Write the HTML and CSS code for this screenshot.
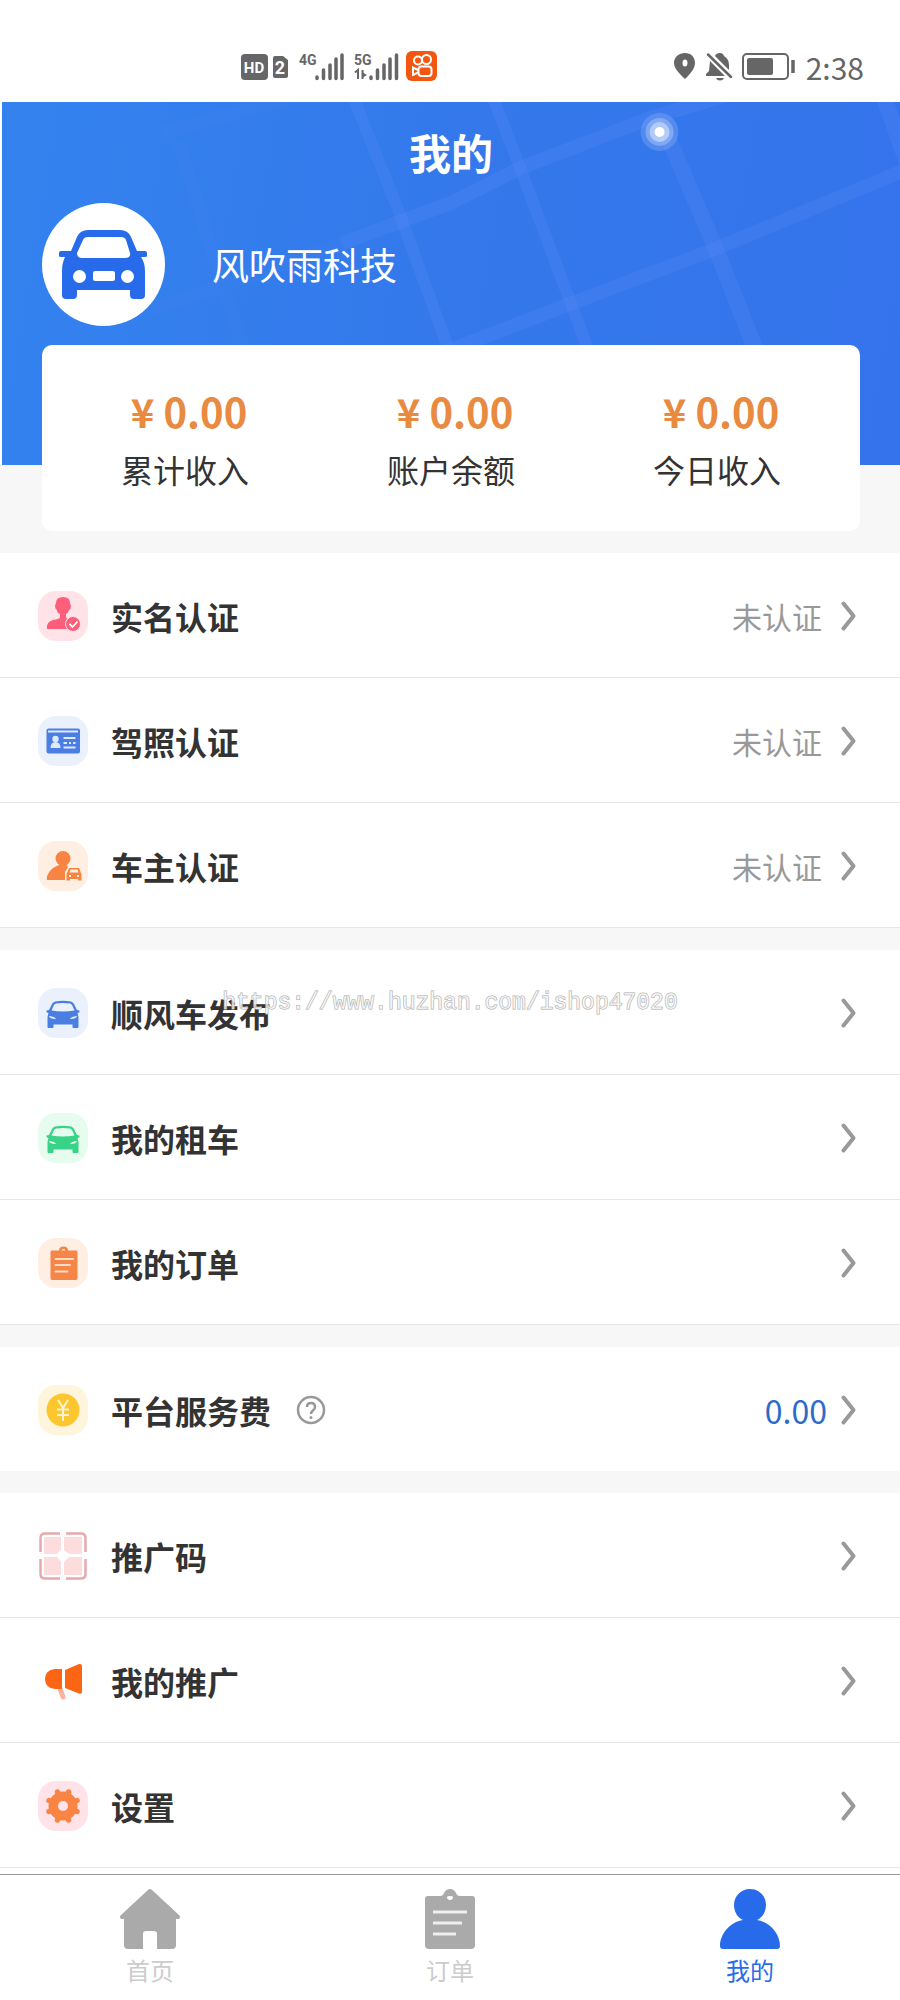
FILE: index.html
```
<!DOCTYPE html>
<html lang="zh-CN">
<head>
    <meta charset="UTF-8">
    <meta name="viewport" content="width=device-width, initial-scale=1.0">
    <title>我的</title>
    <link rel="stylesheet" href="styles.css">
</head>
<body>
    <!-- 公用图标 -->
    <svg class="sprite" aria-hidden="true">
        <symbol id="arrow" viewBox="0 0 16 30">
            <path d="M2.500 2.500L12.500 15L2.500 27.500" fill="none" stroke="#999" stroke-width="4" stroke-linecap="round" stroke-linejoin="round"/>
        </symbol>
        <symbol id="car" viewBox="0 0 50 50">
            <path fill-rule="evenodd" fill="currentColor" d="M17 13.500Q25 12 33 13.500Q35 14 36 16L39 22L41.500 22.500Q42 24.500 39.500 25L40.500 29V39Q40.500 40 39.500 40H35.500Q34.500 40 34.500 39V36.500H15.500V39Q15.500 40 14.500 40H10.500Q9.500 40 9.500 39V29L10.500 25Q8 24.500 8.500 22.500L11 22L14 16Q15 14 17 13.500ZM18 15.500Q16.500 16 16 17L13.500 22.500Q25 24.500 36.500 22.500L34 17Q33.500 16 32 15.500Q25 14.500 18 15.500ZM11 28Q11.500 31 18 31Q17 28.500 11 28ZM39 28Q38.500 31 32 31Q33 28.500 39 28Z"/>
        </symbol>
    </svg>

    <!-- 状态栏 -->
    <div class="status-bar">
        <svg width="198" height="34" viewBox="0 0 198 34" aria-hidden="true">
            <rect x="1" y="4" width="27" height="26" rx="4" fill="#666"/>
            <text class="hd" x="14" y="23" text-anchor="middle">HD</text>
            <path d="M35 6H43L48 10V26Q48 28 46 28H35Q33 28 33 26V8Q33 6 35 6Z" fill="#666"/>
            <text class="sim" x="40" y="24" text-anchor="middle">2</text>
            <text class="net" x="59" y="15">4G</text>
            <path d="M77 28.500V27M83.500 28.500V20M90 28.500V15M96 28.500V9M102 28.500V5" stroke="#666" stroke-width="3.500" stroke-linecap="round"/>
            <text class="net" x="114" y="15">5G</text>
            <path d="M115 22.500L118 20V29M122.500 20V29" fill="none" stroke="#666" stroke-width="2"/>
            <path d="M122 22L127 25L122 28Z" fill="#666"/>
            <path d="M131 28.500V27M137.500 28.500V20M144 28.500V15M150 28.500V9M156.500 28.500V5" fill="none" stroke="#666" stroke-width="3.500" stroke-linecap="round"/>
            <rect x="166" y="1" width="31" height="30" rx="6" fill="#f2560f"/>
            <g fill="none" stroke="#fff" stroke-width="2">
                <circle cx="178" cy="10.500" r="4"/>
                <circle cx="186.500" cy="9.500" r="4.500"/>
                <rect x="178.500" y="16.500" width="13" height="9.500" rx="3"/>
                <path d="M178 20L173 17.500V25L178 22.500"/>
            </g>
        </svg>
        <div class="status-right">
            <svg width="124" height="30" viewBox="0 0 124 30" aria-hidden="true">
                <path fill="#666" fill-rule="evenodd" d="M11 1C17 1 21 5 21 11C21 17 15 23 11 27C7 23 0 17 0 11C0 5 5 1 11 1ZM11 7.500A2.500 3.500 0 1 0 11 14.500A2.500 3.500 0 1 0 11 7.500Z"/>
                <path fill="#666" d="M36 9L51 24H32V22L35 19ZM41 4Q42 1 46 1Q49 1 50 4Q55 7 55 13V18ZM42 26H50Q49 28.500 46 28.500T42 26Z"/>
                <path d="M34 2.500L57 25" stroke="#666" stroke-width="2.500" stroke-linecap="round"/>
                <rect x="69" y="2" width="45" height="25" rx="4" fill="none" stroke="#666" stroke-width="2"/>
                <rect x="73" y="6" width="26" height="17" rx="2" fill="#666"/>
                <path d="M119 8V21" stroke="#666" stroke-width="3.500"/>
            </svg>
            <time class="clock">2:38</time>
        </div>
    </div>

    <!-- 头部 -->
    <header class="hero">
        <svg class="hero-map" viewBox="0 0 900 364" preserveAspectRatio="xMidYMin slice" aria-hidden="true">
            <g fill="none" stroke="#5a8cf8" stroke-opacity=".26">
                <path stroke-width="12" d="M350 -10L397 108L452 260M490 -10L520 68L592 260"/>
                <path stroke-width="16" d="M665 30L713 141L760 260M882 -10L912 75"/>
                <path stroke-width="14" d="M340 142L450 101L520 66L650 16L730 -8M440 252L573 201L713 148L910 66"/>
                <path stroke-width="14" stroke-opacity=".08" d="M150 208L340 142M160 31L290 -4M177 40L245 260"/>
            </g>
            <g fill="#fff">
                <circle cx="659" cy="30" r="19" fill-opacity=".15"/>
                <circle cx="659" cy="30" r="14" fill-opacity=".25"/>
                <circle cx="659" cy="30" r="10" fill-opacity=".4"/>
                <circle cx="659" cy="30" r="5"/>
            </g>
        </svg>
        <h1>我的</h1>
        <div class="profile">
            <svg class="avatar" viewBox="0 0 123 123" aria-hidden="true">
                <circle cx="61.500" cy="61.500" r="61.500" fill="#fff"/>
                <path fill="#286bea" fill-rule="evenodd" d="M46 27H78Q86 27 89 34L95 48H103Q105 48 105 50V53Q105 54 103 54H99Q103 60 103 68V92Q103 96 99 96H92Q88 96 88 92V87H35V92Q35 96 31 96H24Q20 96 20 92V68Q20 60 23 54H19Q17 54 17 53V50Q17 48 19 48H29L35 34Q38 27 46 27ZM46 34Q42 34 41 37L35 50Q35 55 40 55H83Q89 55 88 50L84 37Q83 34 79 34ZM37.500 67A6.500 6.500 0 1 0 37.500 80A6.500 6.500 0 1 0 37.500 67ZM85.500 67A6.500 6.500 0 1 0 85.500 80A6.500 6.500 0 1 0 85.500 67ZM53 68Q51 68 51 70V76Q51 78 53 78H71Q73 78 73 76V70Q73 68 71 68Z"/>
            </svg>
            <span class="name">风吹雨科技</span>
        </div>
    </header>

    <!-- 收入统计 -->
    <section class="stats">
        <div class="stat"><strong>¥ 0.00</strong><span>累计收入</span></div>
        <div class="stat"><strong>¥ 0.00</strong><span>账户余额</span></div>
        <div class="stat"><strong>¥ 0.00</strong><span>今日收入</span></div>
    </section>

    <main>
        <section class="group">
            <a class="row" href="#">
                <svg class="icon pink" viewBox="0 0 50 50" aria-hidden="true">
                    <path fill="#fb5f79" d="M25 6Q32 6 32 12L33 15Q33 18 31 19Q30 22 28 23V26Q29 29 34 30L36 31Q27 33 30 38H9Q8 31 15 29Q22 28 22 26V23Q19 22 19 19Q17 18 17 15L18 12Q18 6 25 6Z"/>
                    <circle cx="35" cy="33" r="7.500" fill="#fb5f79" stroke="#ffe3e8"/>
                    <path d="M31.500 33L34.500 36L39.500 30.500" fill="none" stroke="#fff" stroke-width="1.800"/>
                </svg>
                <span class="label">实名认证</span>
                <span class="state">未认证</span>
                <svg class="arrow"><use href="#arrow"/></svg>
            </a>
            <a class="row" href="#">
                <svg class="icon blue" viewBox="0 0 50 50" aria-hidden="true">
                    <rect x="8.500" y="12.500" width="33.500" height="25" rx="2" fill="#4a7ee3"/>
                    <path d="M10 15.500H40" stroke="#dfe8fc" stroke-width="2"/>
                    <circle cx="17.500" cy="23" r="3.200" fill="#dfe8fc"/>
                    <path d="M12.500 32Q12.500 26 17.500 26T22.500 32Z" fill="#dfe8fc"/>
                    <path d="M25.500 22H37.500M25.500 27H29M31 27H33M35 27H37.500M25.500 31.500H37.500" stroke="#dfe8fc" stroke-width="1.800"/>
                </svg>
                <span class="label">驾照认证</span>
                <span class="state">未认证</span>
                <svg class="arrow"><use href="#arrow"/></svg>
            </a>
            <a class="row" href="#">
                <svg class="icon orange" viewBox="0 0 50 50" aria-hidden="true">
                    <circle cx="25" cy="17.500" r="7.500" fill="#f88443"/>
                    <path fill="#f88443" d="M9 39Q8 35 12 30Q16 25 23 23.500H28L30 26L27 31V39Z"/>
                    <path fill="#f88443" fill-rule="evenodd" d="M31 27H41L42.500 31L43.500 33V39.500H40V38H32V39.500H28.500V33L29.500 31ZM32.500 28.500L31.500 31.500H40.500L39.500 28.500ZM31 34V36H33V34ZM39 34V36H41V34Z"/>
                </svg>
                <span class="label">车主认证</span>
                <span class="state">未认证</span>
                <svg class="arrow"><use href="#arrow"/></svg>
            </a>
        </section>

        <section class="group">
            <a class="row" href="#">
                <svg class="icon blue"><use href="#car"/></svg>
                <span class="label">顺风车发布</span>
                <svg class="arrow"><use href="#arrow"/></svg>
            </a>
            <a class="row" href="#">
                <svg class="icon green"><use href="#car"/></svg>
                <span class="label">我的租车</span>
                <svg class="arrow"><use href="#arrow"/></svg>
            </a>
            <a class="row" href="#">
                <svg class="icon orange" viewBox="0 0 50 50" aria-hidden="true">
                    <path fill="#f58648" fill-rule="evenodd" d="M14 12.500H21Q21 8.500 25.500 8.500T30 12.500H38Q39.500 12.500 39.500 14V40Q39.500 42 38 42H14Q12.500 42 12.500 40V14Q12.500 12.500 14 12.500ZM23.500 12.500H27.500Q27 11 25.500 11T23.500 12.500Z"/>
                    <path d="M17.500 21H35M17.500 27H32M17.500 33.500H29.500" stroke="#ffdcc5" stroke-width="2" stroke-linecap="round"/>
                </svg>
                <span class="label">我的订单</span>
                <svg class="arrow"><use href="#arrow"/></svg>
            </a>
            <div class="watermark">https://www.huzhan.com/ishop47020</div>
        </section>

        <section class="group">
            <div class="row">
                <svg class="icon yellow" viewBox="0 0 50 50" aria-hidden="true">
                    <circle cx="25" cy="25" r="16.500" fill="#fcc62e"/>
                    <path d="M20 15L25 23L30 15M25 23V36M19 24.500H31M19 30H31" fill="none" stroke="#fff3cf" stroke-width="2"/>
                </svg>
                <span class="label">平台服务费</span>
                <button class="help" type="button" aria-label="服务费说明">
                    <svg viewBox="0 0 30 30" aria-hidden="true">
                        <circle cx="15" cy="15" r="13" fill="none" stroke="#999" stroke-width="2.500"/>
                        <path d="M11 12Q11 8 15 8T19 12Q19 14 17 15.500T15 19" fill="none" stroke="#999" stroke-width="2.500"/>
                        <circle cx="15" cy="22.500" r="1.500" fill="#999"/>
                    </svg>
                </button>
                <a class="fee" href="#">0.00<svg class="arrow"><use href="#arrow"/></svg></a>
            </div>
        </section>

        <section class="group">
            <a class="row" href="#">
                <svg class="icon" viewBox="0 0 50 50" aria-hidden="true">
                    <path fill="#fddcde" d="M6 6H23V19L19 23H6V6ZM26 6H44V23H31L26 19ZM6 26H19L23 31V44H6ZM31 26H44V44H26V31Z"/>
                    <path d="M2.500 21V7Q2.500 2.500 7 2.500H22M28 2.500H43Q47.500 2.500 47.500 7V21M47.500 28V43Q47.500 47.500 43 47.500H28M22 47.500H7Q2.500 47.500 2.500 43V28" fill="none" stroke="#e7a9ad" stroke-width="2.500"/>
                </svg>
                <span class="label">推广码</span>
                <svg class="arrow"><use href="#arrow"/></svg>
            </a>
            <a class="row" href="#">
                <svg class="icon" viewBox="0 0 50 50" aria-hidden="true">
                    <path d="M21 30L25 41" stroke="#fdb499" stroke-width="5" stroke-linecap="round"/>
                    <path fill="#fb6514" d="M24 13V33H17Q7 32 7 23T17 13ZM27 14L41 8Q44 7.500 44 10V36Q44 38.500 41 37.500L27 32Z"/>
                </svg>
                <span class="label">我的推广</span>
                <svg class="arrow"><use href="#arrow"/></svg>
            </a>
            <a class="row" href="#">
                <svg class="icon pink" viewBox="0 0 50 50" aria-hidden="true">
                    <circle cx="25" cy="25" r="9.500" fill="none" stroke="#f98545" stroke-width="10"/>
                    <path d="M19.500 11L30.500 39M30.500 11L19.500 39M11 19.500L39 30.500M11 30.500L39 19.500" stroke="#f98545" stroke-width="5.500" stroke-linecap="round"/>
                    <circle cx="25" cy="25" r="5" fill="#ffe3e8"/>
                </svg>
                <span class="label">设置</span>
                <svg class="arrow"><use href="#arrow"/></svg>
            </a>
        </section>
    </main>

    <!-- 底部导航 -->
    <nav class="tab-bar">
        <a class="tab" href="#">
            <svg viewBox="0 0 60 60" aria-hidden="true">
                <path fill="#aaa" d="M28 1Q30 -1 32 1L59 26Q61 28 59 30H56V56Q56 60 52 60H37V45Q37 42 34 42H26Q23 42 23 45V60H8Q4 60 4 56V30H1Q-1 28 1 26Z"/>
            </svg>
            <span>首页</span>
        </a>
        <a class="tab" href="#">
            <svg viewBox="0 0 60 60" aria-hidden="true">
                <path fill="#aaa" fill-rule="evenodd" d="M8 7H20Q23 7 24 4Q26 0 30 0T36 4Q37 7 40 7H52Q55 7 55 10V56Q55 60 51 60H9Q5 60 5 56V10Q5 7 8 7ZM27 8Q27 11 30 11T33 8Q33 7 30 7T27 8Z"/>
                <path d="M13 23H47M13 34H42M13 45H36" stroke="#eee" stroke-width="3"/>
            </svg>
            <span>订单</span>
        </a>
        <a class="tab active" href="#">
            <svg viewBox="0 0 60 60" aria-hidden="true">
                <path fill="#286bea" d="M30 0C39 0 46 7 46 16C46 23 42 29 37 31C50 33 60 45 60 57Q60 60 57 60H3Q0 60 0 57C0 45 10 33 23 31C18 29 14 23 14 16C14 7 21 0 30 0Z"/>
            </svg>
            <span>我的</span>
        </a>
    </nav>
</body>
</html>
```

FILE: styles.css
```
* {
    box-sizing: border-box;
}

body {
    margin: 0;
    min-height: 100vh;
    display: flex;
    flex-direction: column;
    background-color: #f7f7f7;
    color: #333;
    font-family: "Noto Sans CJK SC", sans-serif;
    font-size: 32px;
}

a {
    color: inherit;
    text-decoration: none;
}

svg {
    display: block;
    flex-shrink: 0;
}

.sprite {
    position: absolute;
    width: 0;
    height: 0;
}

/* 状态栏 */
.status-bar {
    display: flex;
    justify-content: space-between;
    align-items: center;
    height: 102px;
    padding: 32px 36px 0 240px;
    background-color: #fff;
}

.status-right {
    display: flex;
    align-items: center;
    gap: 8px;
}

.clock {
    font-size: 30px;
    line-height: 40px;
    color: #666;
}

.hd, .sim, .net {
    font-family: Roboto, sans-serif;
    font-weight: 700;
    fill: #fff;
}

.hd {
    font-size: 15px;
}

.sim {
    font-size: 18px;
}

.net {
    font-size: 14px;
    fill: #666;
}

/* 头部 */
.hero {
    position: relative;
    padding: 20px 40px 139px;
    border-left: 2px solid #fff;
    background: linear-gradient(100deg, #3383ef, #3478eb 50%, #3573ec);
    color: #fff;
}

.hero-map {
    position: absolute;
    top: 0;
    left: 0;
    width: 100%;
    height: 100%;
}

.hero h1 {
    position: relative;
    margin: 0 0 21px;
    font-size: 42px;
    line-height: 60px;
    text-align: center;
}

.profile {
    position: relative;
    display: flex;
    align-items: center;
    gap: 47px;
}

.avatar {
    width: 123px;
    height: 123px;
}

.name {
    padding-bottom: 2px;
    font-size: 37px;
}

/* 收入统计 */
.stats {
    position: relative;
    display: flex;
    margin: -120px 40px 22px 42px;
    padding: 38px 10px;
    border-radius: 10px;
    background-color: #fff;
}

.stat {
    flex: 1;
    display: flex;
    flex-direction: column;
    gap: 6px;
    text-align: center;
    line-height: 48px;
}

.stat strong {
    padding-left: 8px;
    font-size: 40px;
    line-height: 56px;
    color: #e88a40;
}

/* 菜单列表 */
main {
    padding-bottom: 6px;
    background-color: #fff;
}

.group {
    position: relative;
}

.group + .group {
    border-top: 22px solid #f7f7f7;
}

.row {
    display: flex;
    align-items: center;
    height: 125px;
    padding: 2px 43px 0 38px;
    border-bottom: 1px solid #e6e6e6;
    background-color: #fff;
}

.row:only-child {
    height: 124px;
    border-bottom: none;
}

.icon {
    width: 50px;
    height: 50px;
    margin-right: 23px;
}

.pink, .blue, .orange, .green, .yellow {
    border-radius: 18px;
}

.pink {
    background-color: #ffe3e8;
}

.blue {
    background-color: #ebf0fd;
    color: #4a7ee3;
}

.orange {
    background-color: #ffeee2;
}

.green {
    background-color: #e6fcee;
    color: #38d386;
}

.yellow {
    background-color: #fff5dc;
}

.label {
    font-weight: 700;
}

.state {
    margin-left: auto;
    font-size: 30px;
    color: #999;
}

.arrow {
    width: 16px;
    height: 30px;
    margin-left: auto;
}

.state + .arrow {
    margin-left: 19px;
}

.help {
    width: 30px;
    height: 30px;
    margin-left: 25px;
    padding: 0;
    border: none;
    background: none;
}

.fee {
    display: flex;
    align-items: center;
    gap: 14px;
    margin-left: auto;
    color: #2c6bc9;
}

/* 水印 */
.watermark {
    position: absolute;
    top: 37px;
    left: 0;
    right: 0;
    font-family: "Liberation Mono", monospace;
    font-size: 23px;
    line-height: 32px;
    text-align: center;
    color: rgba(255, 255, 255, 0.7);
    -webkit-text-stroke: 1px #aaa;
    paint-order: stroke fill;
    pointer-events: none;
}

/* 底部导航 */
.tab-bar {
    position: sticky;
    bottom: 0;
    display: flex;
    margin-top: auto;
    padding: 14px 0;
    border-top: 1px solid #999;
    background-color: #fff;
}

.tab {
    flex: 1;
    display: flex;
    flex-direction: column;
    align-items: center;
    gap: 5px;
    font-size: 24px;
    line-height: 32px;
    color: #ccc;
}

.tab svg {
    width: 60px;
    height: 60px;
}

.active {
    color: #286bea;
}
```
